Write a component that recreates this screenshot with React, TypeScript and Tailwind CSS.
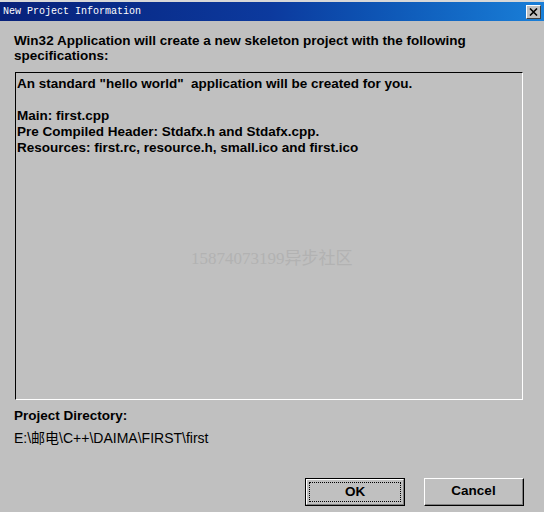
export default function App() {
    const ui = { fontFamily: '"Liberation Sans", Arial, "Noto Sans CJK SC", sans-serif' };

    return (
        <div className="w-[544px] h-[512px] bg-[#c0c0c0] flex flex-col overflow-hidden text-black" style={ui}>
            {/* Title bar */}
            <div className="h-[2px] bg-[#d8d8d8]" />
            <div className="h-[19px] flex items-center justify-between pl-[3px] pr-[3px] bg-gradient-to-r from-[#08217a] via-[#0c3a9e] to-[#1a7fd8]">
                <span
                    className="text-white text-[10px] leading-none"
                    style={{ fontFamily: '"Liberation Mono", "Courier New", monospace' }}
                >
                    New Project Information
                </span>
                <div className="w-[15px] h-[14px] bg-[#c0c0c0] border-t border-l border-white border-r border-b border-r-[#404040] border-b-[#404040] flex items-center justify-center">
                    <svg width="9" height="8" viewBox="0 0 9 8">
                        <path d="M1 0.5l7 7M8 0.5l-7 7" stroke="#000" strokeWidth="1.6" />
                    </svg>
                </div>
            </div>

            <div className="flex flex-col px-[14px] font-bold text-[13.5px]">
                <p className="mt-[12px] leading-[15px] w-[480px]">
                    Win32 Application will create a new skeleton project with the following specifications:
                </p>

                {/* Info box */}
                <div className="relative mt-[9px] ml-[1px] w-[508px] h-[328px] border-t border-l border-black border-r border-b border-r-white border-b-white">
                    <div className="pt-[3px] pl-[1px] leading-[16px]">
                        <p>An standard "hello world"&nbsp; application will be created for you.</p>
                        <p>&nbsp;</p>
                        <p>Main: first.cpp</p>
                        <p>Pre Compiled Header: Stdafx.h and Stdafx.cpp.</p>
                        <p>Resources: first.rc, resource.h, small.ico and first.ico</p>
                    </div>
                    <span
                        className="absolute left-[175px] top-[173px] text-[17px] font-normal text-[#b2b2b2]"
                        style={{ fontFamily: '"Liberation Serif", "Noto Sans CJK SC", serif' }}
                    >
                        15874073199异步社区
                    </span>
                </div>

                <p className="mt-[8px] leading-[16px]">Project Directory:</p>
                <p className="mt-[6px] leading-[16px] font-normal text-[14px]">E:\邮电\C++\DAIMA\FIRST\first</p>

                {/* Buttons */}
                <div className="mt-[32px] flex justify-end gap-[19px] pr-[6px]">
                    <button className="w-[100px] h-[28px] border border-black bg-[#c0c0c0] p-0">
                        <div className="w-full h-full border-t border-l border-white border-r border-b border-r-[#808080] border-b-[#808080] flex items-center justify-center p-[2px]">
                            <div className="w-full h-full border border-dotted border-black flex items-center justify-center text-[13.5px] font-bold">
                                OK
                            </div>
                        </div>
                    </button>
                    <button className="w-[100px] h-[28px] bg-[#c0c0c0] border-t border-l border-white border-r border-b border-r-black border-b-black p-0">
                        <div className="w-full h-full border-r border-b border-r-[#808080] border-b-[#808080] flex items-center justify-center text-[13.5px] font-bold">
                            Cancel
                        </div>
                    </button>
                </div>
            </div>
        </div>
    );
}
